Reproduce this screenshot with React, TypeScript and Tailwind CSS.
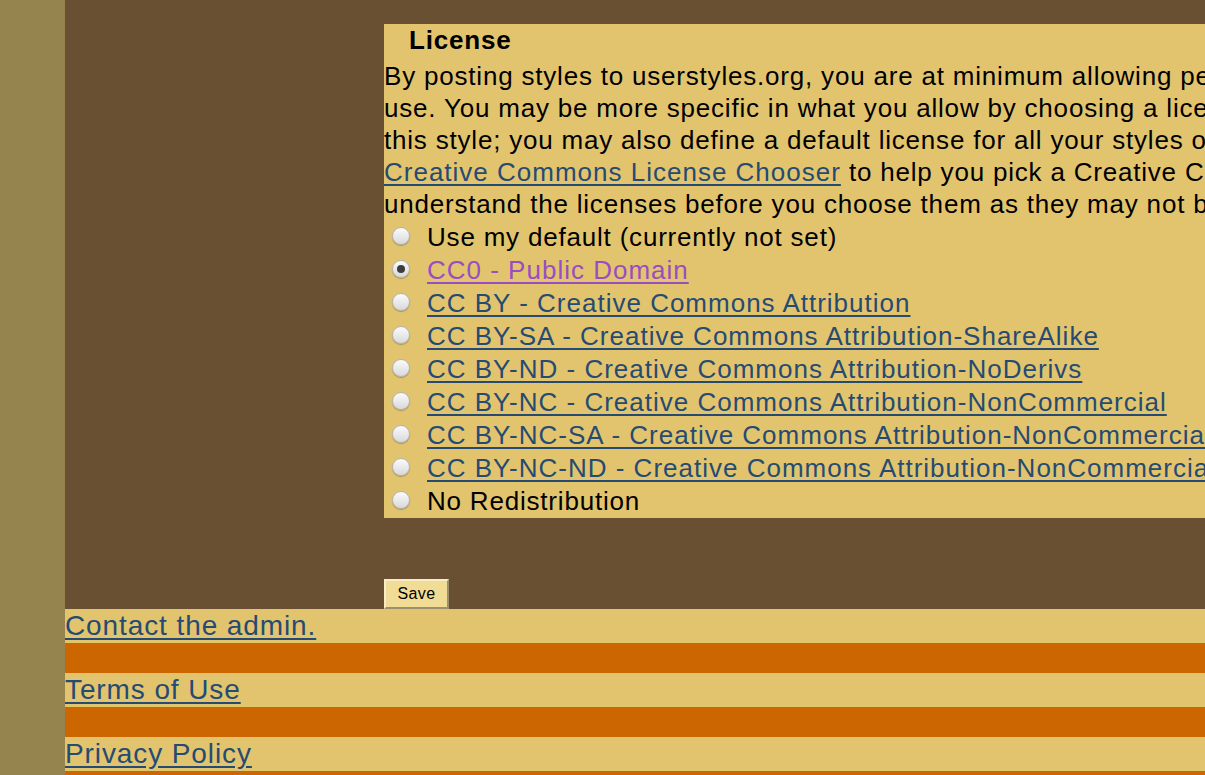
const licenses = [
  { label: "Use my default (currently not set)", link: false },
  { label: "CC0 - Public Domain", link: true, visited: true, checked: true },
  { label: "CC BY - Creative Commons Attribution", link: true },
  { label: "CC BY-SA - Creative Commons Attribution-ShareAlike", link: true },
  { label: "CC BY-ND - Creative Commons Attribution-NoDerivs", link: true },
  { label: "CC BY-NC - Creative Commons Attribution-NonCommercial", link: true },
  { label: "CC BY-NC-SA - Creative Commons Attribution-NonCommercial-ShareAlike", link: true },
  { label: "CC BY-NC-ND - Creative Commons Attribution-NonCommercial-NoDerivs", link: true },
  { label: "No Redistribution", link: false },
];

function Radio({ checked }: { checked?: boolean }) {
  return (
    <span className="flex h-[18px] w-[18px] shrink-0 items-center justify-center rounded-full border border-[#b4b4b4] bg-gradient-to-b from-[#fbfbfb] to-[#d9d9d9] shadow-[0_1px_1px_rgba(0,0,0,0.25)]">
      {checked && <span className="h-[8px] w-[8px] rounded-full bg-[#3d3d3d]" />}
    </span>
  );
}

function FooterRow({ text }: { text: string }) {
  return (
    <>
      <div className="h-[34px] bg-[#e2c46e] text-[28px] leading-[34px] tracking-[0.9px]">
        <a href="#" className="text-[#264b73] underline underline-offset-[3px]">
          {text}
        </a>
      </div>
      <div className="h-[30px] bg-[#cc6600]" />
    </>
  );
}

export default function App() {
  return (
    <div
      className="flex min-h-screen w-[1205px] overflow-hidden bg-[#6a5033] text-[26px] tracking-[0.8px] text-black"
      style={{ fontFamily: '"Liberation Sans", Arial, sans-serif' }}
    >
      <aside className="w-[65px] shrink-0 bg-[#96844f]" />

      <div className="w-[1500px] shrink-0">
        <div className="pl-[319px] pt-[24px]">
          <div className="bg-[#e2c46e]">
            <h2 className="pl-[25px] text-[26px] font-bold leading-[32px]">License</h2>
            <p className="mt-[4px] whitespace-nowrap leading-[32px]">
              By posting styles to userstyles.org, you are at minimum allowing personal
              <br />
              use. You may be more specific in what you allow by choosing a license for
              <br />
              this style; you may also define a default license for all your styles on your
              <br />
              <a href="#" className="text-[#264b73] underline underline-offset-[3px] tracking-[1px]">
                Creative Commons License Chooser
              </a>{" "}
              to help you pick a Creative Commons license. Make sure you
              <br />
              understand the licenses before you choose them as they may not be revocable.
            </p>
            <div className="mt-[1px]">
              {licenses.map((l) => (
                <label key={l.label} className="flex h-[33px] items-center whitespace-nowrap">
                  <span className="ml-[8px] mr-[17px] -mt-[3px]">
                    <Radio checked={l.checked} />
                  </span>
                  {l.link ? (
                    <a
                      href="#"
                      className={
                        (l.visited ? "text-[#9a4dc2]" : "text-[#264b73]") +
                        " underline underline-offset-[3px] tracking-[1px]"
                      }
                    >
                      {l.label}
                    </a>
                  ) : (
                    <span>{l.label}</span>
                  )}
                </label>
              ))}
            </div>
          </div>

          <button
            type="button"
            className="mt-[61px] block h-[30px] w-[65px] border-2 border-t-[#f7ecc6] border-l-[#f7ecc6] border-b-[#9a8f6e] border-r-[#9a8f6e] bg-[#f1dc95] text-[16px] leading-none tracking-[0.4px] text-black"
          >
            Save
          </button>
        </div>

        <FooterRow text="Contact the admin." />
        <FooterRow text="Terms of Use" />
        <FooterRow text="Privacy Policy" />
      </div>
    </div>
  );
}
